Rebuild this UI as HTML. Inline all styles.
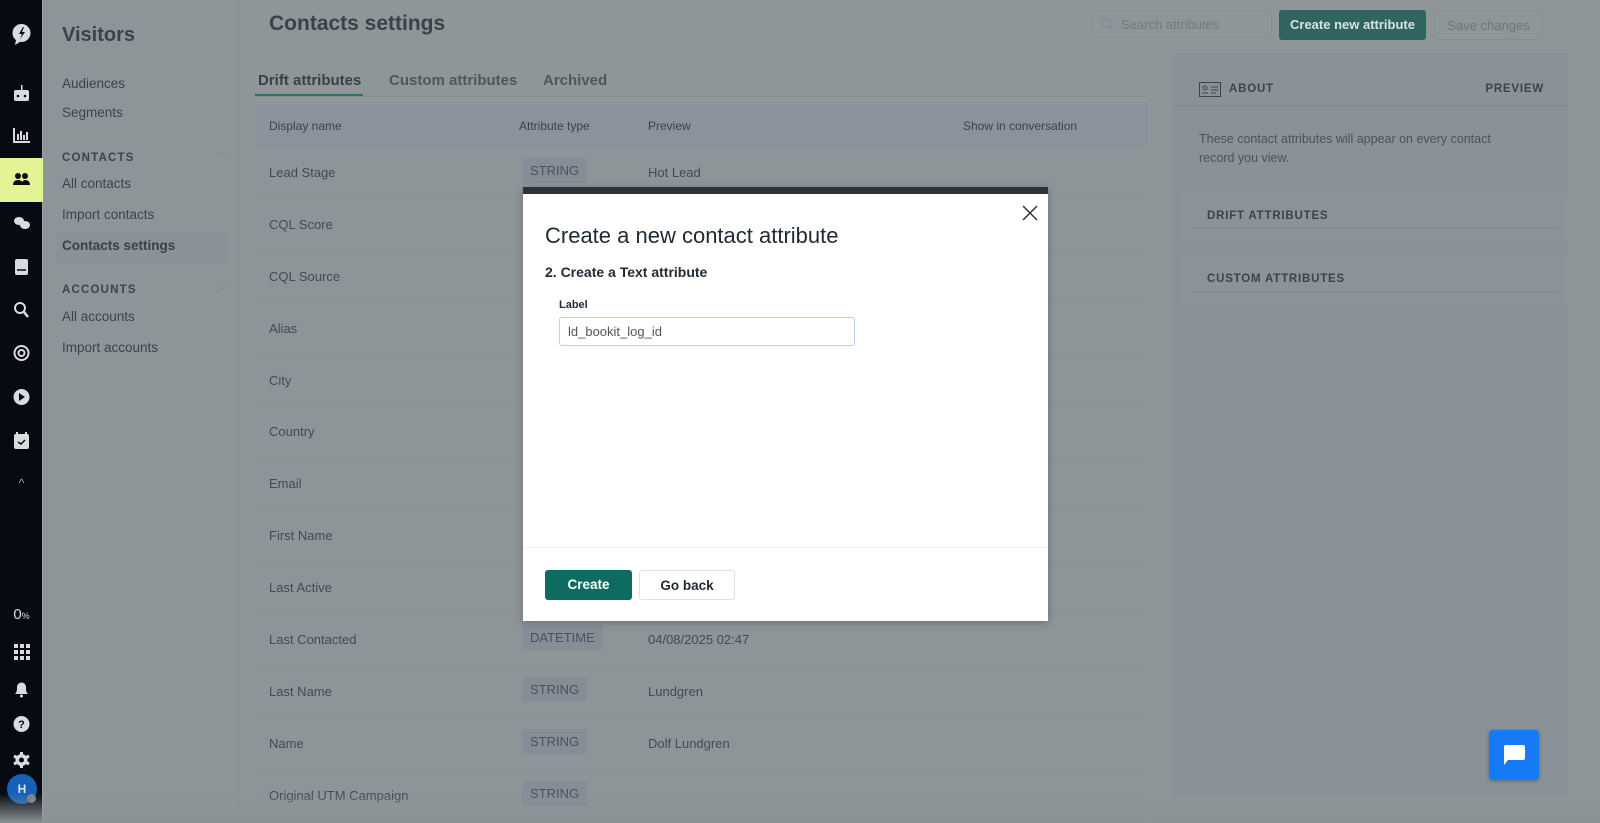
<!DOCTYPE html>
<html><head><meta charset="utf-8"><style>
*{box-sizing:border-box;margin:0;padding:0}
body{width:1600px;height:823px;overflow:hidden;background:#8e9698;font-family:"Liberation Sans",sans-serif;position:relative;color:#3a434b}
.rail{position:absolute;left:0;top:0;width:43px;height:823px;background:#060a12;border-right:1px solid #a0a7ab}
.ic{position:absolute;left:0;width:43px;text-align:center;color:#d9dcdf}
.nav{position:absolute;left:43px;top:0;width:197px;height:823px;background:#8d9598;border-right:1px solid #8a9295}
.nav .t{position:absolute;left:19px;top:24px;font-size:20px;font-weight:bold;color:#3a434b}
.nav a{position:absolute;left:19px;font-size:13.5px;color:#3b444c}
.nav .h{position:absolute;left:19px;font-size:11.5px;font-weight:bold;letter-spacing:1.2px;color:#3b444c}
.sel{position:absolute;left:13px;top:233px;width:170px;height:30px;background:#8a9299}
h1{position:absolute;left:269px;top:12px;font-size:21px;font-weight:bold;color:#39424a}
.tabs{position:absolute;left:255px;top:96px;width:893px;border-top:1px solid #858d92}
.tab{position:absolute;top:72px;font-size:15px;font-weight:bold;color:#4d575e}
.tbl{position:absolute;left:255px;top:104px;width:893px;height:719px;background:#8d9598}
.th{position:absolute;top:0;left:0;width:893px;height:42px;background:#8a929b}
.th span,.row span{position:absolute;font-size:12px;color:#3a434b}
.row{position:absolute;left:0;width:893px;height:52px;border-top:1px solid #8a9296}
.row span{font-size:13px;top:18px;color:#424b52}
.pill{position:absolute;top:11px;left:267px;height:25px;padding:0 8px;background:#858d97;border-radius:3px;font-size:13px;line-height:25px;color:#4a535a}
.rp{position:absolute;left:1172px;top:53px;width:396px;height:744px;background:#8a9299}
.card{position:absolute;left:10px;width:386px;height:50px;border:1px solid #8d959b;border-radius:3px;background:#8b939a}
.card b{position:absolute;left:24px;top:17px;font-size:11.5px;letter-spacing:.8px;color:#3a434b}
.card i{position:absolute;left:8px;right:10px;bottom:12px;border-top:1px solid #7c8893}
.modal{position:absolute;left:523px;top:187px;width:525px;height:434px;background:#fff;border-top:7px solid #2d333b;box-shadow:0 2px 8px rgba(0,0,0,.25)}
.btn{position:absolute;height:30px;border-radius:3px;font-size:13.5px;font-weight:bold;text-align:center;line-height:30px}
</style></head><body>
<div class="rail">
<svg class="ic" style="top:20px" width="43" height="28" viewBox="0 0 43 28"><circle cx="21.5" cy="13" r="9" fill="#d9dcdf"/><path d="M16 20 l-1 5 5-3z" fill="#d9dcdf"/><path d="M23 7 l-4 7h3l-2 5 5-7h-3l2-5z" fill="#060a12"/></svg>
<svg class="ic" style="top:84px" width="43" height="20" viewBox="0 0 43 20"><rect x="14" y="6" width="15" height="11" rx="2" fill="#d9dcdf"/><rect x="21" y="1" width="1.5" height="5" fill="#d9dcdf"/><circle cx="18" cy="12" r="1.3" fill="#060a12"/><circle cx="25" cy="12" r="1.3" fill="#060a12"/></svg>
<svg class="ic" style="top:126px" width="43" height="18" viewBox="0 0 43 18"><path d="M14 2v14h16" stroke="#d9dcdf" stroke-width="2" fill="none"/><path d="M18 8v6M21 5v9M24 9v5M27 6v8" stroke="#d9dcdf" stroke-width="2"/></svg>
<div style="position:absolute;left:0;top:158px;width:43px;height:44px;background:#e4f396"></div>
<svg class="ic" style="top:171px" width="43" height="18" viewBox="0 0 43 18"><circle cx="18" cy="5" r="3" fill="#0a0e14"/><circle cx="25" cy="5" r="3" fill="#0a0e14"/><path d="M13 14c0-4 3-5 5-5s5 1 5 5zM21 14c1-4 3-5 4-5 2 0 5 1 5 5z" fill="#0a0e14"/></svg>
<svg class="ic" style="top:214px" width="43" height="18" viewBox="0 0 43 18"><ellipse cx="19" cy="7" rx="5" ry="4" fill="#d9dcdf"/><ellipse cx="25" cy="11" rx="5" ry="4" fill="#d9dcdf"/></svg>
<svg class="ic" style="top:257px" width="43" height="20" viewBox="0 0 43 20"><rect x="15" y="2" width="13" height="16" rx="2" fill="#d9dcdf"/><path d="M17 13h9" stroke="#060a12" stroke-width="1.5"/></svg>
<svg class="ic" style="top:301px" width="43" height="18" viewBox="0 0 43 18"><circle cx="20" cy="7" r="5" stroke="#d9dcdf" stroke-width="2" fill="none"/><path d="M24 11l4 5" stroke="#d9dcdf" stroke-width="2.5"/></svg>
<svg class="ic" style="top:344px" width="43" height="18" viewBox="0 0 43 18"><circle cx="21.5" cy="9" r="7" stroke="#d9dcdf" stroke-width="2" fill="none"/><circle cx="21.5" cy="9" r="3" stroke="#d9dcdf" stroke-width="2" fill="none"/></svg>
<svg class="ic" style="top:388px" width="43" height="18" viewBox="0 0 43 18"><circle cx="21.5" cy="9" r="8" fill="#d9dcdf"/><path d="M19 5v8l6-4z" fill="#060a12"/></svg>
<svg class="ic" style="top:431px" width="43" height="19" viewBox="0 0 43 19"><rect x="14" y="3" width="15" height="15" rx="2" fill="#d9dcdf"/><path d="M17 1v4M26 1v4" stroke="#d9dcdf" stroke-width="2"/><path d="M18 11l3 2 4-4" stroke="#060a12" stroke-width="1.5" fill="none"/></svg>
<div class="ic" style="top:476px;font-size:12px;color:#aaa">^</div>
<div class="ic" style="top:606px;font-size:15px">0<span style="font-size:9px">%</span></div>
<svg class="ic" style="top:643px" width="43" height="18" viewBox="0 0 43 18"><g fill="#d9dcdf"><rect x="14" y="1" width="4" height="4"/><rect x="20" y="1" width="4" height="4"/><rect x="26" y="1" width="4" height="4"/><rect x="14" y="7" width="4" height="4"/><rect x="20" y="7" width="4" height="4"/><rect x="26" y="7" width="4" height="4"/><rect x="14" y="13" width="4" height="4"/><rect x="20" y="13" width="4" height="4"/><rect x="26" y="13" width="4" height="4"/></g></svg>
<svg class="ic" style="top:679px" width="43" height="20" viewBox="0 0 43 20"><path d="M15 15c2-2 2-4 2-7a4.5 4.5 0 0 1 9 0c0 3 0 5 2 7z" fill="#d9dcdf"/><circle cx="21.5" cy="17" r="1.5" fill="#d9dcdf"/></svg>
<svg class="ic" style="top:715px" width="43" height="18" viewBox="0 0 43 18"><circle cx="21.5" cy="9" r="8" fill="#d9dcdf"/><text x="21.5" y="13" font-size="11" font-weight="bold" text-anchor="middle" fill="#060a12" font-family="Liberation Sans">?</text></svg>
<svg class="ic" style="top:751px" width="43" height="18" viewBox="0 0 43 18"><circle cx="21.5" cy="9" r="6" fill="#d9dcdf"/><path d="M21.5 1v16M14 5l15 8M14 13l15-8" stroke="#d9dcdf" stroke-width="3"/><circle cx="21.5" cy="9" r="2.5" fill="#060a12"/></svg>
<div style="position:absolute;left:7px;top:774px;width:30px;height:30px;border-radius:50%;background:#1660b8;color:#d9e4f2;font-size:12px;font-weight:bold;text-align:center;line-height:30px">H</div>
<div style="position:absolute;left:27px;top:794px;width:9px;height:9px;border-radius:50%;background:#7c848a"></div>
</div>
<div class="nav">
<div class="t">Visitors</div>
<a style="top:76px">Audiences</a><a style="top:105px">Segments</a>
<div class="h" style="top:152px">CONTACTS</div><div style="position:absolute;left:175px;top:148px;font-size:10px;color:#767e84">⌵</div>
<a style="top:176px">All contacts</a><a style="top:207px">Import contacts</a>
<div class="sel"></div><a style="top:238px;font-weight:bold;color:#39424a">Contacts settings</a>
<div class="h" style="top:284px">ACCOUNTS</div><div style="position:absolute;left:175px;top:282px;font-size:10px;color:#767e84">⌵</div>
<a style="top:309px">All accounts</a><a style="top:340px">Import accounts</a>
</div>
<h1>Contacts settings</h1>
<div style="position:absolute;left:1092px;top:10px;width:180px;height:28px;border:1px solid #7f8ea0;border-radius:3px"><svg style="position:absolute;left:7px;top:6px" width="14" height="14"><circle cx="6" cy="6" r="4.5" stroke="#7d8ba0" stroke-width="1.3" fill="none"/><path d="M9.5 9.5l3.5 3.5" stroke="#7d8ba0" stroke-width="1.3"/></svg><span style="position:absolute;left:28px;top:6px;font-size:13px;color:#6f7a84">Search attributes</span></div>
<div class="btn" style="left:1279px;top:10px;width:147px;height:30px;background:#2f645f;color:#d6e3e1;font-size:13px">Create new attribute</div>
<div class="btn" style="left:1434px;top:10px;width:109px;height:30px;border:1px solid #858d92;color:#6d767b;font-size:13px;font-weight:normal">Save changes</div>
<div class="tab" style="left:258px;color:#384148">Drift attributes</div>
<div class="tab" style="left:389px">Custom attributes</div>
<div class="tab" style="left:543px">Archived</div>
<div style="position:absolute;left:255px;top:94px;width:108px;height:2px;background:#2c716a"></div>
<div class="tabs"></div>
<div class="tbl">
<div class="th"><span style="left:14px;top:15px">Display name</span><span style="left:264px;top:15px">Attribute type</span><span style="left:393px;top:15px">Preview</span><span style="left:708px;top:15px">Show in conversation</span></div>
<div class="row" style="top:42px"><span style="left:14px">Lead Stage</span><div class="pill">STRING</div><span style="left:393px">Hot Lead</span></div>
<div class="row" style="top:94px"><span style="left:14px">CQL Score</span></div>
<div class="row" style="top:146px"><span style="left:14px">CQL Source</span></div>
<div class="row" style="top:198px"><span style="left:14px">Alias</span></div>
<div class="row" style="top:250px"><span style="left:14px">City</span></div>
<div class="row" style="top:301px"><span style="left:14px">Country</span></div>
<div class="row" style="top:353px"><span style="left:14px">Email</span></div>
<div class="row" style="top:405px"><span style="left:14px">First Name</span></div>
<div class="row" style="top:457px"><span style="left:14px">Last Active</span></div>
<div class="row" style="top:509px"><span style="left:14px">Last Contacted</span><div class="pill">DATETIME</div><span style="left:393px">04/08/2025 02:47</span></div>
<div class="row" style="top:561px"><span style="left:14px">Last Name</span><div class="pill">STRING</div><span style="left:393px">Lundgren</span></div>
<div class="row" style="top:613px"><span style="left:14px">Name</span><div class="pill">STRING</div><span style="left:393px">Dolf Lundgren</span></div>
<div class="row" style="top:665px"><span style="left:14px">Original UTM Campaign</span><div class="pill">STRING</div></div>
</div>
<div style="position:absolute;left:0;top:793px;width:1600px;height:30px;background:linear-gradient(#8e969800,#8a9294)"></div>
<div class="rp">
<svg style="position:absolute;left:27px;top:29px" width="22" height="15"><rect x="0.5" y="0.5" width="21" height="14" fill="none" stroke="#3a434b"/><circle cx="6" cy="6" r="2" fill="none" stroke="#3a434b"/><path d="M3 11h6M12 5h7M12 8h7M12 11h5" stroke="#3a434b"/></svg>
<div style="position:absolute;left:57px;top:30px;font-size:11.5px;font-weight:bold;letter-spacing:.8px">ABOUT</div>
<div style="position:absolute;right:24px;top:30px;font-size:11.5px;font-weight:bold;letter-spacing:.8px">PREVIEW</div>
<div style="position:absolute;left:0;top:52px;width:396px;border-top:1px solid #7d8893"></div>
<div style="position:absolute;left:27px;top:77px;width:330px;font-size:12.5px;line-height:19px;color:#4a535a">These contact attributes will appear on every contact record you view.</div>
<div class="card" style="top:139px"><b>DRIFT ATTRIBUTES</b><i></i></div>
<div class="card" style="top:202px"><b>CUSTOM ATTRIBUTES</b><i></i></div>
</div>
<div style="position:absolute;left:1489px;top:730px;width:50px;height:50px;border-radius:4px;background:#1679f5;box-shadow:0 1px 4px rgba(0,0,0,.3)"><svg style="position:absolute;left:13px;top:15px" width="24" height="22"><path d="M3 0h18a2 2 0 0 1 2 2v11a2 2 0 0 1-2 2H6l-4 5V2a2 2 0 0 1 1-2z" fill="#fff"/></svg></div>
<div class="modal">
<svg style="position:absolute;right:10px;top:11px" width="16" height="16"><path d="M1 1l14 14M15 1L1 15" stroke="#333" stroke-width="1.5"/></svg>
<div style="position:absolute;left:22px;top:29px;font-size:22px;color:#1f2a33">Create a new contact attribute</div>
<div style="position:absolute;left:22px;top:70px;font-size:14px;font-weight:bold;color:#1f2a33">2. Create a Text attribute</div>
<div style="position:absolute;left:36px;top:105px;font-size:11px;font-weight:bold;color:#1f2a33">Label</div>
<div style="position:absolute;left:36px;top:123px;width:296px;height:29px;border:1px solid #b6d4f2;border-radius:3px;font-size:13px;color:#555;padding:6px 8px">ld_bookit_log_id</div>
<div style="position:absolute;left:0;top:353px;width:525px;border-top:1px solid #eef0f2"></div>
<div class="btn" style="left:22px;top:376px;width:87px;background:#0f6b5f;color:#fff">Create</div>
<div class="btn" style="left:116px;top:376px;width:96px;border:1px solid #dde1e5;color:#1f2a33">Go back</div>
</div>
</body></html>
